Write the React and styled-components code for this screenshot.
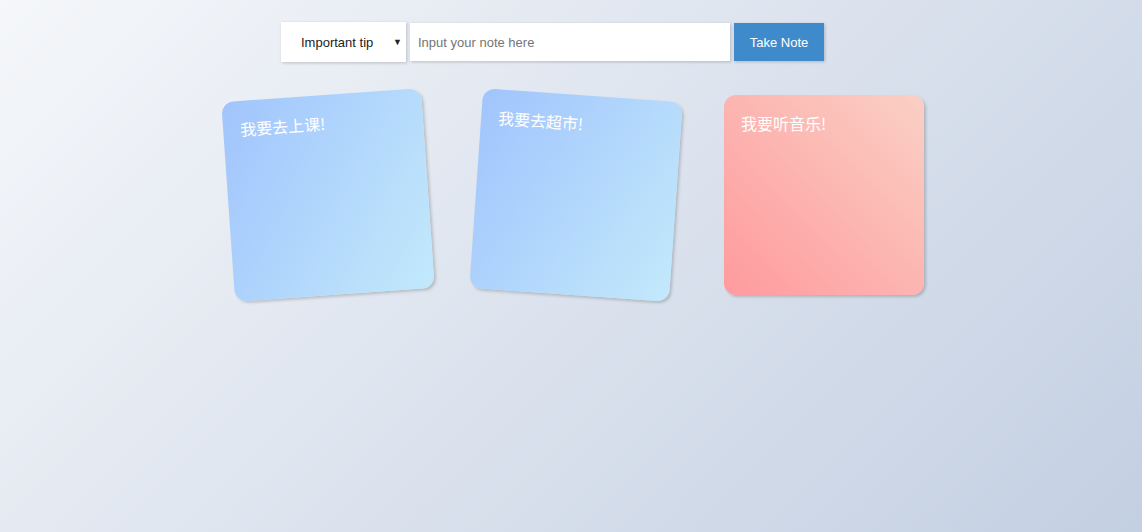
import React from "react";
import styled, { createGlobalStyle } from "styled-components";

const Global = createGlobalStyle`
  html, body { margin: 0; padding: 0; }
  body {
    min-height: 532px;
    background: linear-gradient(135deg, #f5f7fa 0%, #c3cfe2 100%);
    font-family: "Liberation Sans", Arial, sans-serif;
  }
`;

const Page = styled.div`
  min-height: 532px;
  padding-top: 22px;
  box-sizing: border-box;
`;

const Toolbar = styled.form`
  display: flex;
  justify-content: center;
  align-items: center;
  gap: 4px;
  padding-right: 37px;
`;

const SelectBox = styled.div`
  position: relative;
  width: 125px;
  height: 40px;
  background: #fff;
  box-shadow: 1px 1px 3px rgba(0, 0, 0, 0.2);
  display: flex;
  align-items: center;
  padding-left: 20px;
  box-sizing: border-box;
  font-size: 13px;
  color: #222;
`;

const Arrow = styled.span`
  position: absolute;
  right: 4px;
  top: 50%;
  transform: translateY(-50%);
  font-size: 9px;
  line-height: 9px;
  color: #222;
`;

const NoteInput = styled.input`
  width: 320px;
  height: 38px;
  border: none;
  outline: none;
  background: #fff;
  box-shadow: 1px 1px 3px rgba(0, 0, 0, 0.2);
  padding: 0 8px;
  box-sizing: border-box;
  font-family: "Liberation Sans", Arial, sans-serif;
  font-size: 13px;
  color: #333;
  &::placeholder { color: #757575; }
`;

const Button = styled.button`
  width: 90px;
  height: 38px;
  border: none;
  background: #3f8acb;
  color: #fff;
  font-family: "Liberation Sans", Arial, sans-serif;
  font-size: 13px;
  box-shadow: 1px 1px 3px rgba(0, 0, 0, 0.2);
  cursor: pointer;
`;

const Board = styled.div`
  display: flex;
  justify-content: center;
  gap: 48px;
  margin-top: 33px;
  padding-left: 10px;
`;

const Note = styled.div`
  width: 200px;
  height: 200px;
  box-sizing: border-box;
  border-radius: 12px;
  padding: 17px 17px;
  background: ${(p) => p.$bg};
  transform: rotate(${(p) => p.$rot}deg);
  box-shadow: 2px 2px 3px rgba(0, 0, 0, 0.18);
  color: #fff;
  font-family: "Noto Sans CJK SC", "Noto Sans", sans-serif;
  font-size: 16px;
  line-height: 22px;
`;

const blue = "linear-gradient(120deg, #a1c4fd 0%, #c2e9fb 100%)";
const pink = "linear-gradient(45deg, #ff9a9e 0%, #fad0c4 100%)";

const notes = [
  { text: "我要去上课!", bg: blue, rot: -4 },
  { text: "我要去超市!", bg: blue, rot: 4 },
  { text: "我要听音乐!", bg: pink, rot: 0 },
];

export default function App() {
  return (
    <Page>
      <Global />
      <Toolbar onSubmit={(e) => e.preventDefault()}>
        <SelectBox>
          Important tip
          <Arrow>▼</Arrow>
        </SelectBox>
        <NoteInput placeholder="Input your note here" />
        <Button type="submit">Take Note</Button>
      </Toolbar>
      <Board>
        {notes.map((n, i) => (
          <Note key={i} $bg={n.bg} $rot={n.rot}>
            {n.text}
          </Note>
        ))}
      </Board>
    </Page>
  );
}
